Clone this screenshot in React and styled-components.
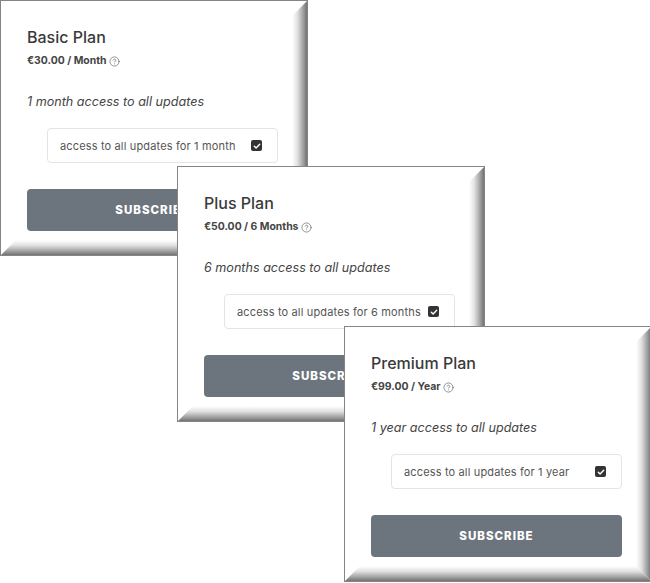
import React from "react";
import styled, { createGlobalStyle } from "styled-components";
import { CircleHelp } from "lucide-react";

const Global = createGlobalStyle`
  html, body { margin: 0; padding: 0; overflow: hidden; background: #fff; }
  body { font-family: Inter, "Open Sans", sans-serif; color: #3a3a3a; }
  * { box-sizing: border-box; }
`;

const Stage = styled.div`
  display: flex;
  flex-direction: column;
  align-items: flex-start;
  width: 650px;
  height: 583px;
`;

const Card = styled.section`
  position: relative;
  flex: none;
  width: 308px;
  height: 256px;
  margin-left: ${(p) => p.$left}px;
  margin-top: ${(p) => p.$top}px;
  background: #fff;
  border: 1px solid #858585;
  padding: 26px 29px 24px 26px;
  display: flex;
  flex-direction: column;
  align-items: stretch;

  &::before {
    content: "";
    position: absolute;
    top: 0;
    right: 0;
    bottom: 0;
    width: 15px;
    background: linear-gradient(to right, rgba(255,255,255,0) 0%, #e2e2e2 35%, #a8a8a8 70%, #737373 100%);
    clip-path: polygon(100% 0, 100% 100%, 0 calc(100% - 15px), 0 15px);
  }
  &::after {
    content: "";
    position: absolute;
    left: 0;
    right: 0;
    bottom: 0;
    height: 15px;
    background: linear-gradient(to bottom, rgba(255,255,255,0) 0%, #e2e2e2 35%, #a8a8a8 70%, #737373 100%);
    clip-path: polygon(0 100%, 15px 0, calc(100% - 15px) 0, 100% 100%);
  }
`;

const Title = styled.h2`
  margin: 0;
  font-size: 16px;
  line-height: 20px;
  font-weight: 500;
  color: #3a3a3a;
`;

const Price = styled.div`
  margin-top: 7px;
  display: flex;
  align-items: center;
  gap: 3px;
  font-size: 10.4px;
  line-height: 14px;
  font-weight: 700;
  color: #444;
  svg { color: #666; }
`;

const Desc = styled.p`
  margin: 25px 0 0;
  font-size: 12.6px;
  line-height: 18px;
  font-style: italic;
  color: #444;
`;

const Feature = styled.label`
  margin: 17px 0 0 20px;
  height: 35px;
  border: 1px solid #e4e4e4;
  border-radius: 4px;
  display: flex;
  align-items: center;
  justify-content: space-between;
  padding: 0 15px 0 12px;
  font-size: 11px;
  letter-spacing: 0.15px;
  color: #555;
`;

const Check = styled.span`
  flex: none;
  width: 11px;
  height: 11px;
  border-radius: 2px;
  background: #333;
  display: flex;
  align-items: center;
  justify-content: center;
`;

const Button = styled.button`
  margin-top: 26px;
  height: 42px;
  border: none;
  border-radius: 4px;
  background: #6c757d;
  color: #fff;
  font-family: Inter, sans-serif;
  font-weight: 800;
  font-size: 11.5px;
  letter-spacing: 1px;
  cursor: pointer;
`;

const plans = [
  { name: "Basic Plan", price: "€30.00 / Month", desc: "1 month access to all updates", feat: "access to all updates for 1 month", left: 0, top: 0 },
  { name: "Plus Plan", price: "€50.00 / 6 Months", desc: "6 months access to all updates", feat: "access to all updates for 6 months", left: 177, top: -90 },
  { name: "Premium Plan", price: "€99.00 / Year", desc: "1 year access to all updates", feat: "access to all updates for 1 year", left: 344, top: -96 },
];

export default function App() {
  return (
    <>
      <Global />
      <Stage>
        {plans.map((p) => (
          <Card key={p.name} $left={p.left} $top={p.top}>
            <Title>{p.name}</Title>
            <Price>
              {p.price}
              <CircleHelp size={11} strokeWidth={1.5} />
            </Price>
            <Desc>{p.desc}</Desc>
            <Feature>
              <span>{p.feat}</span>
              <Check>
                <svg width="8" height="8" viewBox="0 0 8 8">
                  <path d="M1.3 4.2 L3.1 6 L6.7 2.2" fill="none" stroke="#fff" strokeWidth="1.4" strokeLinecap="round" strokeLinejoin="round" />
                </svg>
              </Check>
            </Feature>
            <Button>SUBSCRIBE</Button>
          </Card>
        ))}
      </Stage>
    </>
  );
}
